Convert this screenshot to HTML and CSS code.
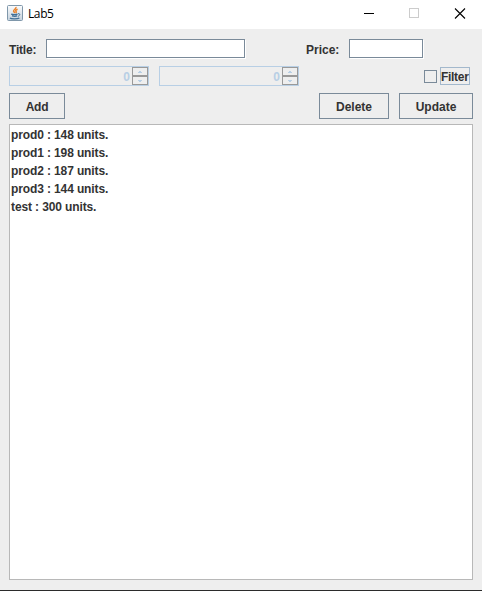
FILE: index.html
```html
<!DOCTYPE html>
<html lang="en">
<head>
<meta charset="utf-8">
<title>Lab5</title>
<link rel="stylesheet" href="styles.css">
</head>
<body>
<div class="window">
  <header class="titlebar">
    <svg class="app-icon" width="16" height="16" viewBox="0 0 16 16">
      <defs><linearGradient id="g" x1="0" y1="0" x2="0" y2="1"><stop offset="0" stop-color="#fbfcfd"/><stop offset="1" stop-color="#c5d2dd"/></linearGradient></defs>
      <rect x=".5" y=".5" width="15" height="15" rx="1" fill="url(#g)" stroke="#7f97aa"/>
      <path d="M9 2C9.4 4 6.2 4.4 6.6 6.2L7.8 8M10.6 4.2C8.4 5 8.4 5.8 9.1 6.5 9.4 7 9.2 7.6 8.8 8" fill="none" stroke="#e9822b" stroke-width="1.5"/>
      <path d="M4.2 9.2C6 9.8 9 9.7 10.6 9.2M5 10.9C6.8 11.4 8.8 11.4 10.2 10.9M3 13C4 14.2 10.8 14.2 12.4 13" fill="none" stroke="#416f96" stroke-width="1.3"/>
      <path d="M11 8.7C13.6 8.2 13.2 10.6 11 11.3" fill="none" stroke="#416f96"/>
    </svg>
    <span class="caption">Lab5</span>
    <svg class="controls" width="104" height="12" viewBox="0 0 104 12" shape-rendering="crispEdges">
      <path d="M0 5.5H10" stroke="#000"/>
      <rect x="45.5" y=".5" width="9" height="9" fill="none" stroke="#ccc"/>
      <path d="M91 .5L101 10.5M101 .5L91 10.5" stroke="#000" stroke-width="1.1" shape-rendering="auto"/>
    </svg>
  </header>
  <main class="content">
    <div class="row fields">
      <label class="title-label">Title:</label>
      <div class="text-field title-field"></div>
      <label class="price-label">Price:</label>
      <div class="text-field price-field"></div>
    </div>
    <div class="row filters">
      <div class="spinner"><span class="value">0</span>
        <div class="arrows">
          <div class="arrow"><svg width="4" height="2" shape-rendering="crispEdges"><path d="M1 0h2v1h1v1H0V1h1z" fill="#b8cfe5"/></svg></div>
          <div class="arrow"><svg width="4" height="2" shape-rendering="crispEdges"><path d="M0 0h4v1H3v1H1V1H0z" fill="#b8cfe5"/></svg></div>
        </div>
      </div>
      <div class="spinner"><span class="value">0</span>
        <div class="arrows">
          <div class="arrow"><svg width="4" height="2" shape-rendering="crispEdges"><path d="M1 0h2v1h1v1H0V1h1z" fill="#b8cfe5"/></svg></div>
          <div class="arrow"><svg width="4" height="2" shape-rendering="crispEdges"><path d="M0 0h4v1H3v1H1V1H0z" fill="#b8cfe5"/></svg></div>
        </div>
      </div>
      <div class="check"><span class="box"></span><span class="check-label">Filter</span></div>
    </div>
    <div class="row actions">
      <div class="button add">Add</div>
      <div class="button delete">Delete</div>
      <div class="button update">Update</div>
    </div>
    <ul class="list">
      <li>prod0 : 148 units.</li>
      <li>prod1 : 198 units.</li>
      <li>prod2 : 187 units.</li>
      <li>prod3 : 144 units.</li>
      <li>test : 300 units.</li>
    </ul>
  </main>
</div>
</body>
</html>
```
FILE: styles.css
```css
* { box-sizing: border-box; }
body { margin: 0; }
svg { display: block; }
.window {
  width: 482px;
  height: 591px;
  display: flex;
  flex-direction: column;
  background: #eee;
  border-bottom: 1px solid #2b2b2b;
  font: bold 12px/18px "Liberation Sans", Arial, sans-serif;
  color: #333;
}
.titlebar {
  height: 29px;
  display: flex;
  align-items: flex-start;
  padding: 5px 14px 0 7px;
  background: #fff;
}
.caption {
  margin-left: 5px;
  font: 12px/17px "Open Sans", "Noto Sans", sans-serif;
  letter-spacing: -0.4px;
  color: #000;
}
.controls { margin: 3px 0 0 auto; }
.content {
  flex: 1;
  display: flex;
  flex-direction: column;
  padding: 10px 9px;
}
.row { display: flex; }
.fields { height: 20px; line-height: 22px; }
.title-label { width: 37px; letter-spacing: -0.2px; }
.text-field {
  height: 19px;
  background: #fff;
  border: 1px solid #7a8a99;
  box-shadow: 1px 1px 0 #fff;
}
.title-field { width: 199px; }
.price-label { width: 43px; margin-left: 61px; }
.price-field { width: 74px; }
.filters { margin-top: 7px; height: 20px; }
.spinner {
  display: flex;
  justify-content: flex-end;
  width: 140px;
  height: 20px;
  margin-right: 10px;
  border: 1px solid #b8cfe5;
}
.value { margin-right: 2px; line-height: 20px; color: #b8cfe5; }
.arrows { width: 16px; }
.arrow {
  display: flex;
  align-items: center;
  justify-content: center;
  height: 9px;
  border: 1px solid #999;
}
.check { display: flex; align-items: flex-start; margin: 1px 3px 0 auto; }
.box { width: 13px; height: 13px; margin: 3px 3px 0 0; border: 1px solid #7a8a99; }
.check-label {
  width: 30px;
  height: 18px;
  border: 1px solid #a3b8cc;
  line-height: 18px;
  letter-spacing: -0.3px;
  white-space: nowrap;
}
.actions { margin-top: 7px; height: 26px; }
.button {
  height: 26px;
  border: 1px solid #7a8a99;
  text-align: center;
  line-height: 26px;
}
.add { width: 56px; letter-spacing: -0.2px; }
.delete { width: 70px; margin-left: auto; }
.update { width: 74px; margin-left: 10px; }
.list {
  flex: 1;
  margin: 5px 0 0;
  padding: 1px;
  list-style: none;
  background: #fff;
  border: 1px solid #b8b8b8;
}
.list li { height: 18px; line-height: 18px; letter-spacing: -0.12px; }
```
